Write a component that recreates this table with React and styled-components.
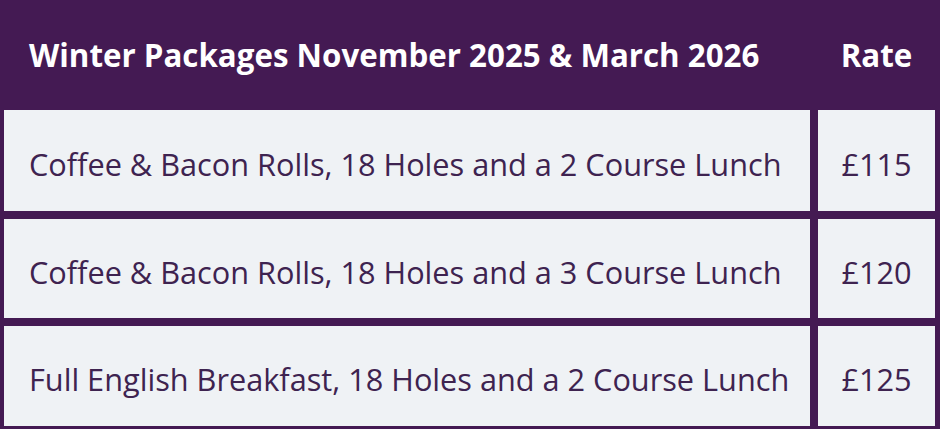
import React from "react";
import styled, { createGlobalStyle } from "styled-components";

const Global = createGlobalStyle`
  html, body { margin: 0; padding: 0; background: #441a53; }
  body { font-family: "Open Sans", "Noto Sans", sans-serif; }
`;

const Table = styled.div`
  width: 940px;
  height: 429px;
  box-sizing: border-box;
  background: #441a53;
  padding: 0 5px 3px 4px;
  display: grid;
  grid-template-columns: 806px 117px;
  grid-template-rows: 102px 101px 99px 100px;
  gap: 8px;
  overflow: hidden;
`;

const HeadCell = styled.div`
  display: flex;
  align-items: center;
  justify-content: ${(p) => (p.$center ? "center" : "flex-start")};
  padding: ${(p) => (p.$center ? "8px 0 0 0" : "8px 0 0 25px")};
  color: #ffffff;
  font-weight: 700;
  font-size: 31.3px;
  white-space: nowrap;
`;

const Cell = styled.div`
  display: flex;
  align-items: center;
  justify-content: ${(p) => (p.$center ? "center" : "flex-start")};
  padding: ${(p) => (p.$center ? "6px 0 0 0" : "6px 0 0 25px")};
  background: #eff2f5;
  color: #3e2350;
  font-size: 30.7px;
  white-space: nowrap;
`;

const rows = [
  ["Coffee & Bacon Rolls, 18 Holes and a 2 Course Lunch", "£115"],
  ["Coffee & Bacon Rolls, 18 Holes and a 3 Course Lunch", "£120"],
  ["Full English Breakfast, 18 Holes and a 2 Course Lunch", "£125"],
];

export default function App() {
  return (
    <>
      <Global />
      <Table>
        <HeadCell>Winter Packages November 2025 &amp; March 2026</HeadCell>
        <HeadCell $center>Rate</HeadCell>
        {rows.map(([desc, rate]) => (
          <React.Fragment key={rate}>
            <Cell>{desc}</Cell>
            <Cell $center>{rate}</Cell>
          </React.Fragment>
        ))}
      </Table>
    </>
  );
}
